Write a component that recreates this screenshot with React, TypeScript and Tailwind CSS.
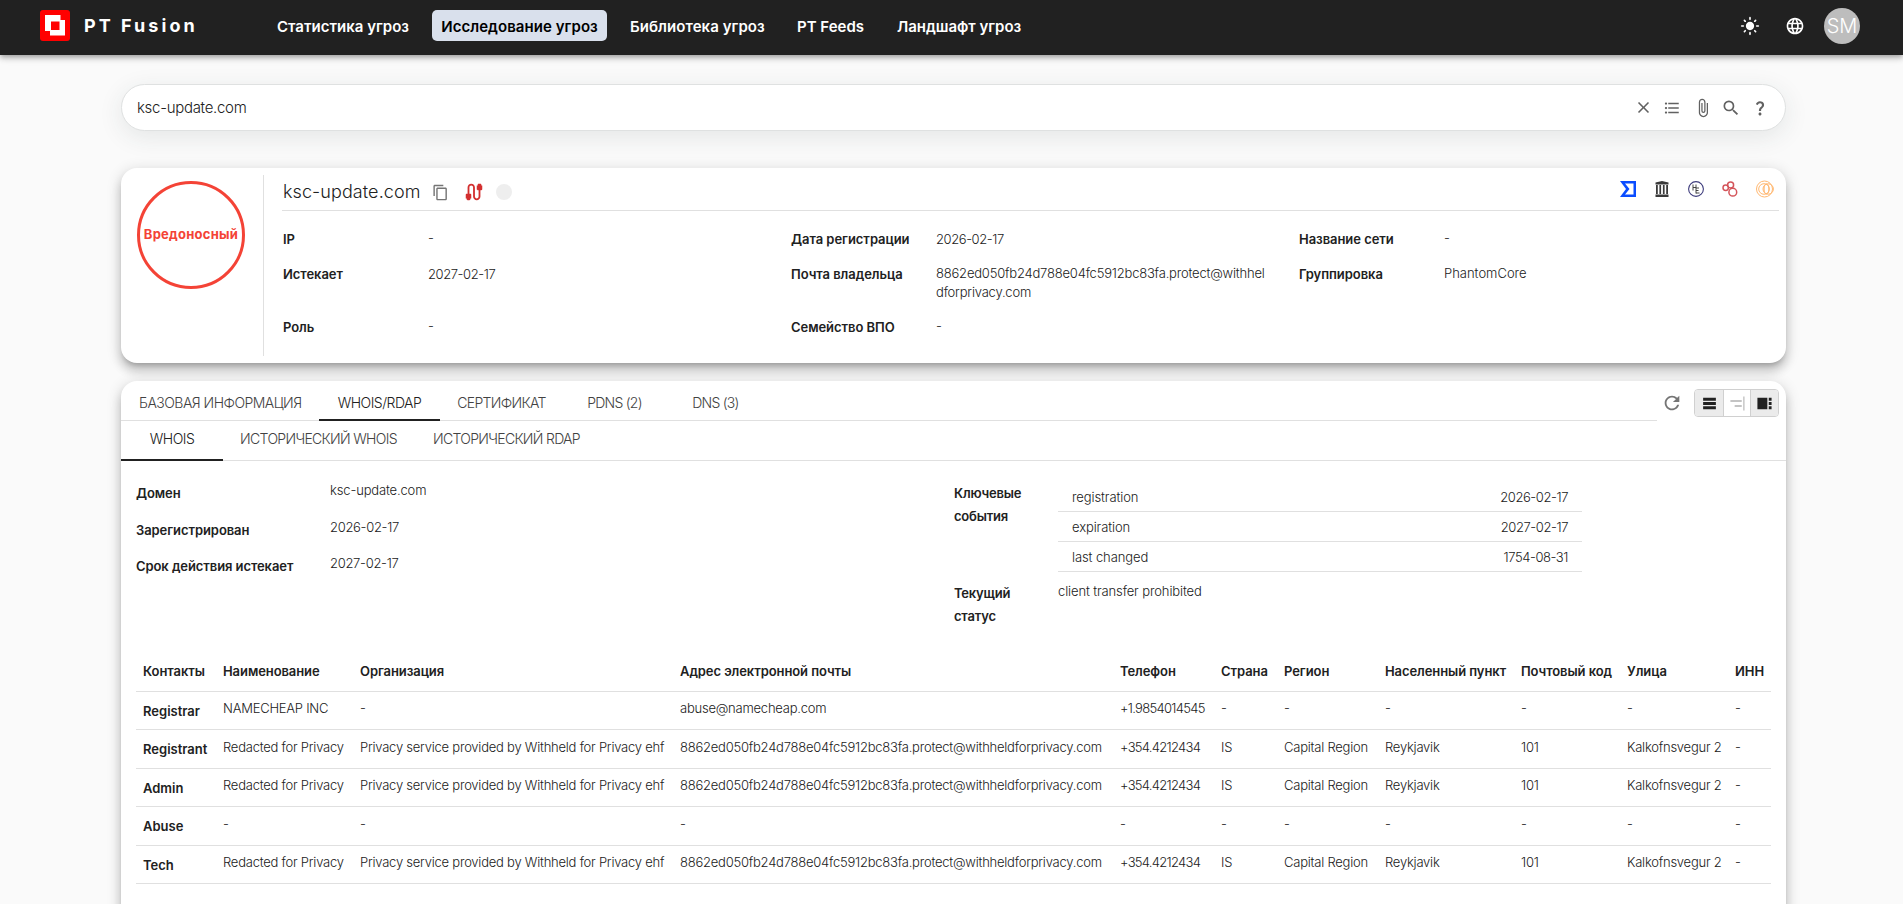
import type { ReactNode } from 'react'
import { MdAlignHorizontalRight, MdAttachFile, MdCable, MdClose, MdContentCopy, MdFormatListBulleted, MdLanguage, MdLightMode, MdQuestionMark, MdRefresh, MdSearch, MdTableRows, MdViewSidebar } from 'react-icons/md'

const EMAIL = '8862ed050fb24d788e04fc5912bc83fa.protect@withheldforprivacy.com'

const contactHead = [
  { label: 'Контакты', width: 80 },
  { label: 'Наименование', width: 137 },
  { label: 'Организация', width: 320 },
  { label: 'Адрес электронной почты', width: 440 },
  { label: 'Телефон', width: 101 },
  { label: 'Страна', width: 63 },
  { label: 'Регион', width: 101 },
  { label: 'Населенный пункт', width: 136 },
  { label: 'Почтовый код', width: 106 },
  { label: 'Улица', width: 108 },
  { label: 'ИНН', width: 43 },
]

const redacted = ['Redacted for Privacy', 'Privacy service provided by Withheld for Privacy ehf', EMAIL, '+354.4212434', 'IS', 'Capital Region', 'Reykjavik', '101', 'Kalkofnsvegur 2', '-']

const contacts = [
  { role: 'Registrar', cells: ['NAMECHEAP INC', '-', 'abuse@namecheap.com', '+1.9854014545', '-', '-', '-', '-', '-', '-'] },
  { role: 'Registrant', cells: redacted },
  { role: 'Admin', cells: redacted },
  { role: 'Abuse', cells: ['-', '-', '-', '-', '-', '-', '-', '-', '-', '-'] },
  { role: 'Tech', cells: redacted },
]

const events = [
  { name: 'registration', date: '2026-02-17' },
  { name: 'expiration', date: '2027-02-17' },
  { name: 'last changed', date: '1754-08-31' },
]

const Logo = () => (
  <svg width="30" height="31" viewBox="0 0 30 31" className="shrink-0">
    <rect width="30" height="31" rx="3" fill="#f00" />
    <path fill="#fff" fillRule="evenodd" d="M5 5h15.500v5H25v15.500H10V21H5zM11 11.500V20h8.500v-8.500z" />
  </svg>
)

const Header = () => (
  <header className="z-10 flex h-[55px] shrink-0 items-center bg-[#212121] pl-10 text-white shadow-[0_2px_4px_-1px_rgba(0,0,0,0.2),0_4px_5px_rgba(0,0,0,0.14),0_1px_10px_rgba(0,0,0,0.12)]">
    <div className="flex w-[227px] items-center gap-3.5 pb-1">
      <Logo />
      <span className="text-[18px] font-bold tracking-[3.050px]">PT Fusion</span>
    </div>
    <nav className="flex items-center pb-1 text-[15px] font-semibold whitespace-nowrap">
      <a className="w-[165px] pt-[3px] pl-2.5">Статистика угроз</a>
      <a className="flex h-[31px] w-[175px] items-center justify-center rounded-[5px] bg-[#d9e0ec] pt-[3px] tracking-[0.05px] text-black">Исследование угроз</a>
      <a className="w-[167px] pt-[3px] pl-[23px] tracking-[0.05px]">Библиотека угроз</a>
      <a className="w-[100px] pt-[3px] pl-[23px]">PT Feeds</a>
      <a className="pt-[3px] pl-[23px] tracking-[-0.03px]">Ландшафт угроз</a>
    </nav>
    <div className="ml-auto flex items-center pr-[43px] pb-[3px]">
      <MdLightMode size={20} />
      <MdLanguage size={20} className="ml-[25px]" />
      <div className="ml-[19px] flex size-9 items-center justify-center rounded-full bg-[#bdbdbd] text-[20px] font-light">SM</div>
    </div>
  </header>
)

const SearchBar = () => (
  <div className="mt-[29px] ml-[121px] flex h-[47px] w-[1665px] shrink-0 items-center rounded-full border border-[#dfe1e1] bg-white pr-4 pl-[15px] shadow-[0_6px_24px_rgba(40,60,60,0.1)]">
    <span className="pt-0.5 text-[15px] font-light tracking-[-0.3px]">ksc-update.com</span>
    <div className="ml-auto flex items-center text-[#616161]">
      <MdClose size={19} className="mr-2.5" />
      <MdFormatListBulleted size={18} className="mr-3" />
      <MdAttachFile size={20} className="mr-2" />
      <MdSearch size={20} className="mr-2.5" />
      <MdQuestionMark size={18} />
    </div>
  </div>
)

const VirusTotal = () => (
  <svg width="16" height="16" viewBox="0 0 16 16">
    <path fill="#0b4dff" fillRule="evenodd" d="M0 0h16v16H0l6-8zM5 2.500l4.500 5.500L5 13.500h8.500v-11z" />
  </svg>
)

const Archive = () => (
  <svg width="16" height="16" viewBox="0 0 14 16" fill="#3a3a3a">
    <path d="M7 0l6.500 1.500v2H.5v-2zM1 4h1.800v9H1zM4.400 4h1.700v9H4.400zM7.900 4h1.700v9H7.900zM11.200 4H13v9h-1.800zM.5 13.500h13V16H.5z" />
  </svg>
)

const HurricaneElectric = () => (
  <svg width="16" height="16" viewBox="0 0 16 16" fill="none" stroke="#3d3b7c">
    <circle cx="8" cy="8" r="7.400" strokeWidth="1.100" />
    <path stroke="#333" strokeWidth=".9" d="M5 3.500v6M8 3.500v9M5 6.500h3M8 7h3M8 9.500h2.500M8 12h3.500" />
  </svg>
)

const Circles = () => (
  <svg width="16" height="16" viewBox="0 0 16 16" fill="none" stroke="#d4545a" strokeWidth="1.500">
    <circle cx="3.700" cy="6.800" r="2.700" />
    <circle cx="8.600" cy="3.900" r="3" />
    <circle cx="10.800" cy="11.200" r="3.900" />
  </svg>
)

const Rings = () => (
  <svg width="18" height="18" viewBox="0 0 18 18" fill="none" stroke="#ffb871">
    <circle cx="8.500" cy="9" r="8" />
    <circle cx="8" cy="9" r="5.300" />
    <ellipse cx="10.500" cy="9" rx="2.400" ry="5" />
    <circle cx="12.200" cy="9" r="5.200" />
  </svg>
)

const Field = ({ label, numeric, children }: { label: string; numeric?: boolean; children: ReactNode }) => (
  <div className="flex">
    <div className="w-[145px] shrink-0 pt-px text-[13px] font-semibold tracking-[-0.05px]">{label}</div>
    <div className={numeric ? 'pt-px text-[13px] font-light tracking-[-0.42px]' : 'w-[332px] text-[13px] font-light tracking-[-0.2px] break-all'}>{children}</div>
  </div>
)

const SummaryCard = () => (
  <section className="mt-[37px] ml-[121px] flex h-[195px] w-[1665px] shrink-0 rounded-2xl bg-white pt-[7px] pb-[7px] shadow-[0_5px_5px_-3px_rgba(0,0,0,0.2),0_8px_10px_1px_rgba(0,0,0,0.14),0_3px_14px_2px_rgba(0,0,0,0.12)]">
    <div className="w-[143px] shrink-0 border-r border-[#e0e0e0] pt-1.5 pl-4">
      <div className="flex size-[108px] items-center justify-center rounded-full border-3 border-[#f44336] text-[13px] font-bold tracking-[0.25px] whitespace-nowrap text-[#f44336]">Вредоносный</div>
    </div>
    <div className="mr-[7px] ml-[18px] flex-1">
      <div className="flex h-9 items-center border-b border-[#e0e0e0] pb-0.5">
        <span className="pl-px text-[18px] font-light tracking-[0.08px]">ksc-update.com</span>
        <MdContentCopy size={17} className="mt-0.5 ml-3 text-[#757575]" />
        <MdCable size={22} className="ml-3.5 text-[#d32f2f]" />
        <span className="ml-[11px] size-4 rounded-full bg-[#eee]" />
        <div className="ml-auto flex items-center gap-[18px] pr-[5px] pb-[5px]">
          <VirusTotal />
          <Archive />
          <HurricaneElectric />
          <Circles />
          <Rings />
        </div>
      </div>
      <div className="grid grid-cols-[508px_508px_1fr] grid-rows-[35px_53px_auto] pt-[18px] pl-px leading-[19px]">
        <Field label="IP">-</Field>
        <Field label="Дата регистрации" numeric>2026-02-17</Field>
        <Field label="Название сети">-</Field>
        <Field label="Истекает" numeric>2027-02-17</Field>
        <Field label="Почта владельца">{EMAIL}</Field>
        <Field label="Группировка"><span className="tracking-normal">PhantomCore</span></Field>
        <Field label="Роль">-</Field>
        <Field label="Семейство ВПО">-</Field>
      </div>
    </div>
  </section>
)

const MainTabs = () => (
  <div className="flex h-10 text-[14px] font-light whitespace-nowrap text-[#424242]">
    <div className="flex flex-1 border-b border-[#e0e0e0]">
      <div className="w-[198px] pt-[11px] pl-[18px] tracking-[-0.53px]">БАЗОВАЯ ИНФОРМАЦИЯ</div>
      <div className="-mb-px w-[121px] border-b-2 border-[#212121] pt-[11px] text-center tracking-[-0.5px] text-[#212121]">WHOIS/RDAP</div>
      <div className="w-[123px] pt-[11px] text-center tracking-[-0.68px]">СЕРТИФИКАТ</div>
      <div className="w-[102px] pt-[11px] pl-px text-center tracking-[-0.75px]">PDNS (2)</div>
      <div className="w-[101px] pt-[11px] text-center tracking-[-0.75px]">DNS (3)</div>
    </div>
    <div className="flex w-[129px] items-center">
      <MdRefresh size={22} className="mt-1 ml-1 text-[#757575]" />
      <div className="mt-1 ml-[11px] flex h-7 w-[85px] overflow-hidden rounded-[4px] border border-[#d0d0d0]">
        <span className="flex flex-1 items-center justify-center bg-[#ebebeb] pl-px text-[#212121]"><MdTableRows size={17} /></span>
        <span className="flex flex-1 items-center justify-center border-x border-[#d0d0d0] text-[#c4c4c4]"><MdAlignHorizontalRight size={17} /></span>
        <span className="flex flex-1 items-center justify-center bg-[#ebebeb] text-[#212121]"><MdViewSidebar size={17} /></span>
      </div>
    </div>
  </div>
)

const SubTabs = () => (
  <div className="flex h-10 border-b border-[#e0e0e0] text-[14px] font-light whitespace-nowrap text-[#424242]">
    <div className="-mb-px w-[102px] border-b-2 border-[#212121] pt-[7px] text-center tracking-[-0.5px] text-[#212121]">WHOIS</div>
    <div className="w-[191px] pt-[7px] text-center tracking-[-0.68px]">ИСТОРИЧЕСКИЙ WHOIS</div>
    <div className="w-[183px] pt-[7px] pl-0.5 text-center tracking-[-0.7px]">ИСТОРИЧЕСКИЙ RDAP</div>
  </div>
)

const Detail = ({ label, children }: { label: string; children: ReactNode }) => (
  <div className="flex h-[36.700px] text-[13px] leading-[23px]">
    <div className="w-[194px] shrink-0 font-semibold tracking-[-0.08px]">{label}</div>
    <div className="-mt-[3px] font-light tracking-[-0.3px]">{children}</div>
  </div>
)

const WhoisDetails = () => (
  <div className="flex h-[191.500px] pt-[21px] text-[13px]">
    <div className="w-[818px]">
      <Detail label="Домен"><span className="tracking-[-0.15px]">ksc-update.com</span></Detail>
      <Detail label="Зарегистрирован">2026-02-17</Detail>
      <Detail label="Срок действия истекает">2027-02-17</Detail>
    </div>
    <div className="leading-[23px]">
      <div className="flex h-[100px]">
        <div className="w-[104px] font-semibold tracking-[-0.2px]">Ключевые<br />события</div>
        <div className="w-[524px]">
          {events.map((event) => (
            <div key={event.name} className="flex h-[30px] items-center justify-between border-b border-[#e0e0e0] pt-0.5 pr-3.5 pl-3.5 font-light">
              <span className="tracking-[-0.1px]">{event.name}</span>
              <span className="tracking-[-0.42px]">{event.date}</span>
            </div>
          ))}
        </div>
      </div>
      <div className="flex">
        <div className="w-[104px] font-semibold tracking-[-0.2px]">Текущий<br />статус</div>
        <div className="-mt-0.5 font-light tracking-[-0.12px]">client transfer prohibited</div>
      </div>
    </div>
  </div>
)

const ContactsTable = () => (
  <table className="w-[1635px] table-fixed border-collapse text-left text-[13px] whitespace-nowrap">
    <thead>
      <tr className="h-[38.500px] border-b border-[#e0e0e0]">
        {contactHead.map((col) => (
          <th key={col.label} className="pl-[7px] font-semibold tracking-[-0.08px]" style={{ width: col.width }}>
            {col.label}
          </th>
        ))}
      </tr>
    </thead>
    <tbody>
      {contacts.map((contact) => (
        <tr key={contact.role} className="h-[38.500px] border-b border-[#e0e0e0]">
          <th className="pt-0.5 pl-[7px] font-semibold">{contact.role}</th>
          {contact.cells.map((cell, index) => (
            <td key={index} className={cell.startsWith('+') ? 'pb-[3px] pl-[7px] font-light tracking-[-0.7px]' : 'pb-[3px] pl-[7px] font-light tracking-[-0.23px]'}>
              {cell}
            </td>
          ))}
        </tr>
      ))}
    </tbody>
  </table>
)

const App = () => {
  return (
    <div className="flex h-[904px] w-[1903px] flex-col overflow-hidden bg-[#fafafa] font-['Inter','Noto_Sans',sans-serif] text-[#212121]">
      <Header />
      <SearchBar />
      <SummaryCard />
      <section className="mt-[18px] ml-[121px] h-[560px] w-[1665px] shrink-0 rounded-t-2xl bg-white shadow-[0_5px_5px_-3px_rgba(0,0,0,0.2),0_8px_10px_1px_rgba(0,0,0,0.14),0_3px_14px_2px_rgba(0,0,0,0.12)]">
        <MainTabs />
        <SubTabs />
        <div className="pl-[15px]">
          <WhoisDetails />
          <ContactsTable />
        </div>
      </section>
    </div>
  )
}

export default App
